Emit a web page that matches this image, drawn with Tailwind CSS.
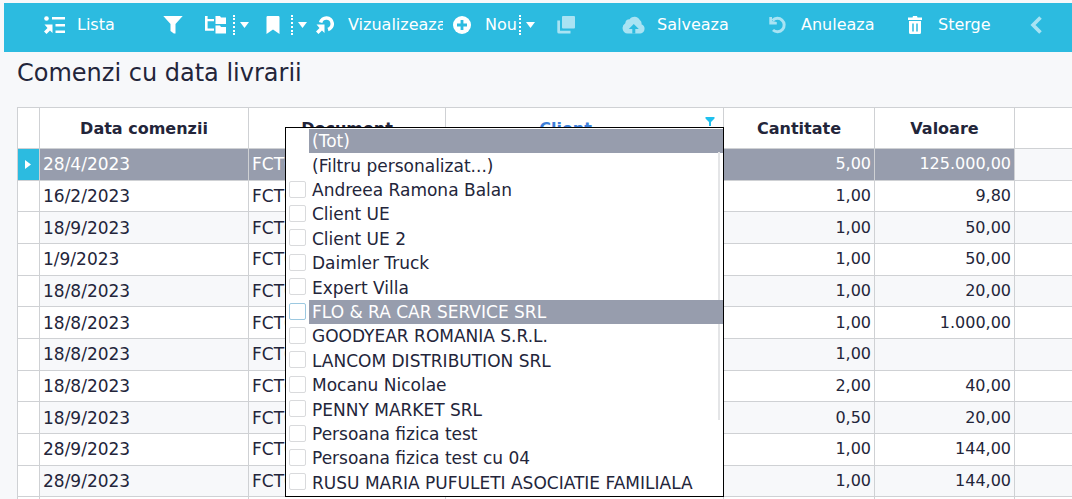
<!DOCTYPE html>
<html lang="ro">
<head>
<meta charset="utf-8">
<title>Comenzi cu data livrarii</title>
<script src="https://cdn.jsdelivr.net/npm/@tailwindcss/browser@4"></script>
</head>
<body class="h-screen overflow-hidden bg-[#f7f8fa] pl-1 pt-[3px] font-['DejaVu_Sans',sans-serif] text-[16px] text-[#23253a]">

<header class="flex h-[49px] items-start overflow-hidden bg-[#2cbbe0] pl-10 text-white">
  <nav class="flex h-[44px] shrink-0 items-center" aria-label="Comenzi">
    <button class="flex w-[119px] items-center gap-3">
      <svg class="h-[18px] w-[21px]" viewBox="0 0 21 18" fill="currentColor"><circle cx="2.500" cy="2.500" r="2.300"/><path d="M8 1h13v2.500H8zM11.500 8H21v2.500H11.500zM11.500 14.500H21V17H11.500zM0.500 8.500H8.500V17L6 14.500 2.500 18 0 15.500 3.500 12z"/></svg>
      <span>Lista</span>
    </button>
    <button class="w-[42px]" aria-label="Filtru">
      <svg class="h-[18px] w-5" viewBox="0 0 20 18" fill="currentColor"><path d="M0.300 0H19.700L12.500 8V17.500H10.800L7.500 15V8z"/></svg>
    </button>
    <button class="w-7" aria-label="Arbore">
      <svg class="h-[18px] w-[21px]" viewBox="0 0 21 18" fill="currentColor"><path d="M0 0h2.600v3H9v2.300H2.600V12.500H9v2.300H0zM10.500 0H15l1 1.500h5V8H10.500zM10.500 9.500H15L16 11h5v6.500H10.500z"/></svg>
    </button>
    <button class="flex h-5 w-[33px] items-center border-l-2 border-dotted border-white pl-[5px]" aria-label="Optiuni arbore">
      <svg class="h-[6px] w-[9px]" viewBox="0 0 9 6" fill="currentColor"><path d="M0 0h9L4.500 6z"/></svg>
    </button>
    <button class="w-[25px]" aria-label="Marcaje">
      <svg class="h-[18px] w-[14px]" viewBox="0 0 14 18" fill="currentColor"><path d="M0.500 1.200Q0.500 0 1.700 0H12.300Q13.500 0 13.500 1.200V18L7 13.500 0.500 18z"/></svg>
    </button>
    <button class="flex h-5 w-[25px] items-center border-l-2 border-dotted border-white pl-[5px]" aria-label="Optiuni marcaje">
      <svg class="h-[6px] w-[9px]" viewBox="0 0 9 6" fill="currentColor"><path d="M0 0h9L4.500 6z"/></svg>
    </button>
    <button class="flex w-[137px] items-center gap-[14px]">
      <svg class="h-[18px] w-[18px] shrink-0" viewBox="0 0 18 18" fill="currentColor"><path d="M4.600 6.500A5.900 5.900 0 1 1 12 13.500" fill="none" stroke="currentColor" stroke-width="3.600"/><path d="M0.500 8.500H8.500V17L6 14.500 2.500 18 0 15.500 3.500 12z"/></svg>
      <span class="w-[95px] overflow-hidden text-left">Vizualizeaza</span>
    </button>
    <button class="flex w-[66px] items-center gap-[14px]">
      <svg class="h-[18px] w-[18px]" viewBox="0 0 18 18"><circle cx="9" cy="9" r="9" fill="currentColor"/><path d="M9 4v10M4 9h10" stroke="#2cbbe0" stroke-width="2.800"/></svg>
      <span>Nou</span>
    </button>
    <button class="flex h-5 w-[38px] items-center border-l-2 border-dotted border-white pl-[5px]" aria-label="Optiuni nou">
      <svg class="h-[6px] w-[9px]" viewBox="0 0 9 6" fill="currentColor"><path d="M0 0h9L4.500 6z"/></svg>
    </button>
    <button class="w-[65px] text-[#a9e3f3]" aria-label="Copiaza">
      <svg class="h-[18px] w-[18px]" viewBox="0 0 18 18" fill="currentColor"><rect x="5" y="0" width="13" height="12.500" rx="1"/><path d="M0.300 4.500H3V14.800H13.500V17.500H2Q0.300 17.500 0.300 16z"/></svg>
    </button>
    <button class="flex w-[147px] items-center gap-3">
      <svg class="h-[18px] w-[23px] text-[#a9e3f3]" viewBox="0 0 23 18"><path fill="currentColor" d="M5.500 17.500A5.500 5.500 0 0 1 3.300 7.300 4.300 4.300 0 0 1 7.600 3.300 6 6 0 0 1 17.800 4 4.200 4.200 0 0 1 19.500 8.300 4.800 4.800 0 0 1 18.500 17.500z"/><path fill="#2cbbe0" d="M11.800 8l5 5h-3.500V17.500H10.300V13H6.800z"/></svg>
      <span>Salveaza</span>
    </button>
    <button class="flex w-[139px] items-center gap-[14px]">
      <svg class="h-[18px] w-[18px] text-[#a9e3f3]" viewBox="0 0 18 18"><path d="M3.500 4.500A6.700 6.700 0 1 1 4 14" fill="none" stroke="currentColor" stroke-width="3"/><path fill="currentColor" d="M0.300 1V8.500H7.800V6L3 5V1z"/></svg>
      <span>Anuleaza</span>
    </button>
    <button class="flex w-[122px] items-center gap-4">
      <svg class="h-[18px] w-[14px]" viewBox="0 0 14 18"><path fill="currentColor" d="M0 1.500H4.500L5 0H9L9.500 1.500H14V4H0zM1 5H13V16.500Q13 18 11.500 18H2.500Q1 18 1 16.500z"/><path d="M5 7.500V15.500M9 7.500V15.500" stroke="#2cbbe0" stroke-width="1.500"/></svg>
      <span>Sterge</span>
    </button>
    <button class="text-[#a9e3f3]" aria-label="Inapoi">
      <svg class="h-[18px] w-3" viewBox="0 0 12 18" fill="none" stroke="currentColor" stroke-width="3.600"><path d="M10.500 1.500L3 9l7.500 7.500"/></svg>
    </button>
  </nav>
</header>

<main class="relative pl-[13px]">
  <h1 class="h-[55px] pt-[7px] text-[24px] leading-[28px]">Comenzi cu data livrarii</h1>

  <table class="h-[422px] w-full table-fixed border-separate border-spacing-0 border-l border-t border-[#cfd1d4] [&_td]:border-b [&_td]:border-r [&_td]:border-[#cfd1d4] [&_td]:px-[3px] [&_td]:py-0 [&_td:last-child]:border-r-0 [&_th]:border-b [&_th]:border-r [&_th]:border-[#cfd1d4] [&_th]:bg-white [&_th]:pt-[2px] [&_th:last-child]:border-r-0">
    <colgroup><col class="w-[22px]"><col class="w-[209px]"><col class="w-[197px]"><col class="w-[278px]"><col class="w-[151px]"><col class="w-[140px]"><col></colgroup>
    <thead>
      <tr class="h-[41px]">
        <th aria-label="Rand"></th>
        <th>Data comenzii</th>
        <th>Document</th>
        <th class="text-[#3d7fd9]">
          <div class="flex items-center"><span class="flex-1 pr-5">Client</span>
          <button class="mb-4 mr-2 w-[10px]" aria-label="Filtru client"><svg class="h-[9px] w-[10px]" viewBox="0 0 10 9" fill="#1fc0ee"><path d="M0.500 0h9v1.500L6 5v4H4V5L0.500 1.500z"/></svg></button></div>
        </th>
        <th>Cantitate</th>
        <th>Valoare</th>
        <th aria-label="Altele"></th>
      </tr>
    </thead>
    <tbody id="rows"></tbody>
  </table>

  <form class="absolute left-[281px] top-[75px] flex h-[370px] w-[439px] flex-col border border-black bg-white py-px pl-px" id="menu" aria-label="Filtru client">
    <span class="absolute right-[3px] top-6 h-[268px] w-[2px] bg-[#e4e5e7]"></span>
  </form>
</main>

<script>
  const orders = [
    ['28/4/2023', '5,00', '125.000,00'],
    ['16/2/2023', '1,00', '9,80'],
    ['18/9/2023', '1,00', '50,00'],
    ['1/9/2023', '1,00', '50,00'],
    ['18/8/2023', '1,00', '20,00'],
    ['18/8/2023', '1,00', '1.000,00'],
    ['18/8/2023', '1,00', ''],
    ['18/8/2023', '2,00', '40,00'],
    ['18/9/2023', '0,50', '20,00'],
    ['28/9/2023', '1,00', '144,00'],
    ['28/9/2023', '1,00', '144,00'],
    ['&nbsp;', '', '']
  ];
  document.getElementById('rows').innerHTML = orders.map(([date, qty, value], i) => {
    const sel = i === 0;
    const bg = sel ? 'bg-[#979dad] text-white' : i % 2 ? 'bg-white' : 'bg-[#f7f8fa]';
    const mark = sel ? '<svg class="ml-1 h-[9px] w-[6px]" viewBox="0 0 6 9" fill="#fff"><path d="M0 0l6 4.500L0 9z"/></svg>' : '';
    return `<tr>
      <td class="${sel ? 'bg-[#2cbbe0]' : 'bg-white'}">${mark}</td>
      <td class="text-[17px] leading-6 ${bg}">${date}</td>
      <td class="text-[17px] leading-6 ${bg}">${qty ? 'FCT0' : ''}</td>
      <td class="${bg}"></td>
      <td class="text-right ${bg}">${qty}</td>
      <td class="text-right ${bg}">${value}</td>
      <td class="${i % 2 ? 'bg-white' : 'bg-[#f7f8fa]'}"></td>
    </tr>`;
  }).join('');

  const clients = ['Andreea Ramona Balan', 'Client UE', 'Client UE 2', 'Daimler Truck', 'Expert Villa',
    'FLO &amp; RA CAR SERVICE SRL', 'GOODYEAR ROMANIA S.R.L.', 'LANCOM DISTRIBUTION SRL', 'Mocanu Nicolae',
    'PENNY MARKET SRL', 'Persoana fizica test', 'Persoana fizica test cu 04', 'RUSU MARIA PUFULETI ASOCIATIE FAMILIALA'];
  const text = 'flex min-w-0 flex-1 items-center self-stretch whitespace-nowrap pl-[3px] text-[17px] leading-6';
  document.getElementById('menu').insertAdjacentHTML('beforeend',
    `<button type="button" class="ml-[22px] ${text} bg-[#979dad] text-white">(Tot)</button>
     <button type="button" class="ml-[22px] ${text}">(Filtru personalizat...)</button>` +
    clients.map((name, i) => {
      const hot = i === 5;
      return `<label class="flex min-h-0 flex-1 items-center gap-[3px] pl-[2px]">
        <input type="checkbox" class="mb-[2px] h-[17px] w-[17px] appearance-none rounded-[2px] border bg-white ${hot ? 'border-[#9cc8e0]' : 'border-[#d9dadc]'}">
        <span class="${text} ${hot ? 'relative bg-[#979dad] text-white' : ''}">${name}</span></label>`;
    }).join(''));
</script>
</body>
</html>
